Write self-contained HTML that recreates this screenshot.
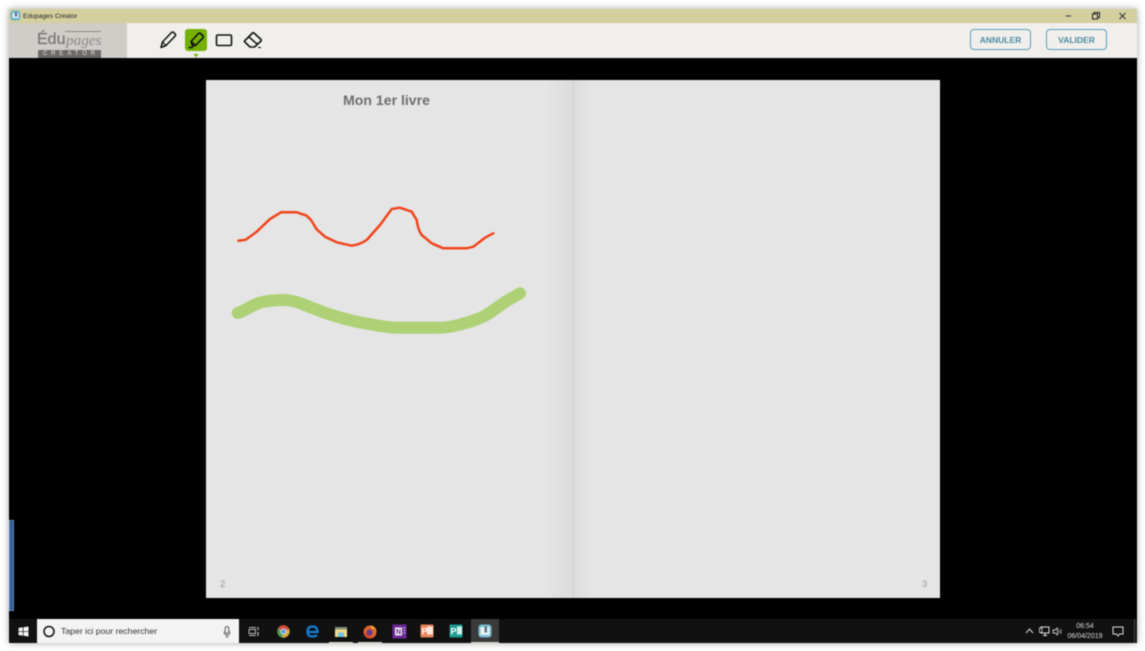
<!DOCTYPE html>
<html lang="fr">
<head>
<meta charset="utf-8">
<title>Edupages Creator</title>
<style>
html,body{margin:0;padding:0;background:#fff;}
body{width:1145px;height:651px;overflow:hidden;position:relative;font-family:"Liberation Sans",sans-serif;}
#all{position:absolute;left:0;top:0;width:1145px;height:651px;filter:blur(.4px);}
.abs{position:absolute;}
#win{left:9px;top:9px;width:1128px;height:634px;background:#000;box-shadow:0 0 7px rgba(0,0,0,.35);}
#title{left:9px;top:9px;width:1128px;height:14px;background:#d3cf9f;}
#title span{position:absolute;left:14px;top:3px;font-size:6.700px;line-height:10px;color:#222;}
#bar{left:9px;top:23px;width:1128px;height:35px;background:#f0efeb;}
#logo{left:9px;top:23px;width:118px;height:35px;background:#d0ccc8;}
.btn{top:29px;height:21px;border:1px solid #5d9fb5;border-radius:4px;box-sizing:border-box;color:#4d8ca3;font-size:8.500px;font-weight:bold;line-height:20px;text-align:center;background:#f0efeb;}
#page{left:206px;top:80px;width:734px;height:518px;background:#e5e5e5;}
#shade{left:545px;top:80px;width:28px;height:518px;background:linear-gradient(90deg,rgba(0,0,0,0),rgba(0,0,0,.045));}
#shade2{left:574px;top:80px;width:18px;height:518px;background:linear-gradient(90deg,rgba(0,0,0,.035),rgba(0,0,0,0));}
#task{left:9px;top:619px;width:1128px;height:24px;background:#111;}
#search{left:37px;top:619px;width:202px;height:24px;background:#f3f3f3;}
#search span{position:absolute;left:24px;top:7px;font-size:8.700px;line-height:11px;color:#333;}
.tray{color:#ddd;font-size:7px;line-height:9px;text-align:center;}
svg{position:absolute;overflow:visible;}
</style>
</head>
<body>
<div id="all">
<div class="abs" id="win"></div>
<div class="abs" id="title"><span>Edupages Creator</span></div>
<svg style="left:10px;top:10px" width="11" height="11" viewBox="0 0 11 11"><rect x="0.500" y="0.500" width="10" height="10" rx="3" fill="#6db5c9"/><rect x="2.500" y="3" width="6" height="5" fill="#e4f0f0"/><rect x="5" y="2.500" width="2" height="4" fill="#558"/></svg>
<svg style="left:1060px;top:10px" width="70" height="12" viewBox="0 0 70 12"><path d="M6 6h5" stroke="#333" stroke-width="1"/><rect x="32.500" y="4" width="5" height="5" fill="none" stroke="#222" stroke-width="1"/><path d="M34 4V2.500H39.500V7.500H37.500" fill="none" stroke="#222" stroke-width="1"/><path d="M59.500 3l6 6M65.500 3l-6 6" stroke="#333" stroke-width="1"/></svg>

<div class="abs" id="bar"></div>
<div class="abs" id="logo"></div>
<div class="abs" style="left:37px;top:30px;font-size:16px;line-height:19px;color:#7d7a78;-webkit-text-stroke:.35px #7d7a78;">Édu</div>
<div class="abs" style="left:66px;top:31px;font-family:'Liberation Serif',serif;font-style:italic;font-size:15.200px;line-height:19px;color:#8d8a88;">pages</div>
<div class="abs" style="left:65px;top:31px;width:36px;height:1px;background:#8d8986;"></div>
<div class="abs" style="left:38px;top:50px;width:63px;height:8px;background:#6f6a68;color:#e4e1de;font-size:6px;line-height:8px;text-align:center;letter-spacing:3.900px;text-indent:3px;">CREATOR</div>

<svg style="left:158px;top:30px" width="20" height="20" viewBox="0 0 20 20"><path d="M3 17.500L4.500 12 13.500 2.500Q14.500 1.700 15.500 2.300L17.300 4.200Q18 5.200 17 6.200L8 15.500Z" fill="none" stroke="#111" stroke-width="1.500" stroke-linejoin="round"/><path d="M4.500 12L8 15.500" stroke="#111" stroke-width="1.200"/></svg>
<div class="abs" style="left:185px;top:29px;width:22px;height:22px;background:#74b100;border-radius:3px;"></div>
<svg style="left:185px;top:29px" width="22" height="22" viewBox="0 0 22 22"><path d="M6 12.500L13.500 4.500Q14.500 3.800 15.500 4.500L18 7Q18.600 8 18 8.800L10.500 16.500L7.500 17Z" fill="none" stroke="#111" stroke-width="1.600" stroke-linejoin="round"/><path d="M6 12.500L10.500 16.500M3.500 18.500H8" stroke="#111" stroke-width="1.600"/></svg>
<svg style="left:193px;top:54px" width="6" height="4" viewBox="0 0 6 4"><path d="M0.500 0H5.500L3 3.500Z" fill="#74b100"/></svg>
<svg style="left:215px;top:33px" width="18" height="14" viewBox="0 0 18 14"><rect x="1.500" y="2" width="15" height="10.500" rx="1.300" fill="none" stroke="#111" stroke-width="1.600"/></svg>
<svg style="left:243px;top:31px" width="20" height="18" viewBox="0 0 20 18"><path d="M1.500 10L9.500 2Q10.200 1.500 11 2L18 8.500Q18.400 9.300 18 10L11.500 16H7L1.500 10.700Z" fill="none" stroke="#111" stroke-width="1.600" stroke-linejoin="round"/><path d="M6 6L14 13" stroke="#111" stroke-width="1.500"/><path d="M15 16.500H18" stroke="#111" stroke-width="1"/></svg>

<div class="abs btn" style="left:970px;width:61px;">ANNULER</div>
<div class="abs btn" style="left:1046px;width:61px;">VALIDER</div>

<div class="abs" id="page"></div>
<div class="abs" id="shade"></div>
<div class="abs" id="shade2"></div>
<div class="abs" style="left:573px;top:80px;width:1px;height:518px;background:#cecece;"></div>
<div class="abs" style="left:206px;top:92px;width:361px;text-align:center;font-size:14.100px;line-height:17px;font-weight:bold;color:#6f6f6f;">Mon 1er livre</div>
<div class="abs" style="left:220px;top:579px;font-size:9.500px;line-height:12px;color:#a8a8a8;-webkit-text-stroke:.2px #a8a8a8;">2</div>
<div class="abs" style="left:922px;top:579px;font-size:9.500px;line-height:12px;color:#a8a8a8;-webkit-text-stroke:.2px #a8a8a8;">3</div>

<svg style="left:0;top:0" width="1145" height="651" viewBox="0 0 1145 651">
<path d="M238.300 240.700L245.700 239.700L256.700 231.700L270 219L281 212.300H296.700L306.700 215.700L311 220L316.700 229.300L325 236.700L336.700 242.300L351.700 245.700Q360 244.500 366.700 240L380 225L391.700 209L400 207.700L411.700 211.700L416.700 220Q418 230 421.700 235L431.700 243.300L443.300 248.300H466.700L473.300 246.700L485 237.700L493.300 233.300" fill="none" stroke="#f1451c" stroke-width="2.500" stroke-linejoin="round" stroke-linecap="round"/>
<path d="M237.700 313C245 311 252 305 260 302.700C268 300.500 280 299.500 288.300 300.300C295 301 300 303 305 305C314 308.500 322 312 331.700 315C343 318.500 354 321.500 365 323.300C376 325 387 327.700 398.300 327.700H438.300C446 327.700 452 326.700 458.300 325C468 322.500 477 320 485 315.700C494 310.500 500 305 508.300 300L520 293.300" fill="none" stroke="#aed175" stroke-width="12" stroke-linejoin="round" stroke-linecap="round"/>
</svg>

<div class="abs" style="left:9px;top:520px;width:5px;height:91px;background:#34609f;box-shadow:inset 0 0 0 .5px #8da6c4;"></div>

<div class="abs" id="task"></div>
<svg style="left:18px;top:626px" width="11" height="11" viewBox="0 0 11 11"><path d="M0.500 2L4.800 1.300V5.200H0.500ZM5.500 1.200L10.500 0.500V5.200H5.500ZM0.500 5.900H4.800V9.700L0.500 9ZM5.500 5.900H10.500V10.500L5.500 9.800Z" fill="#f4f4f4"/></svg>
<div class="abs" id="search"><span>Taper ici pour rechercher</span></div>
<svg style="left:43px;top:625px" width="13" height="13" viewBox="0 0 13 13"><circle cx="6" cy="6.500" r="5" fill="none" stroke="#111" stroke-width="1.500"/></svg>
<svg style="left:223px;top:626px" width="8" height="12" viewBox="0 0 8 12"><rect x="2.200" y="0.500" width="3.600" height="7" rx="1.800" fill="none" stroke="#555" stroke-width="1"/><path d="M1 5.500Q1 9 4 9T7 5.500M4 9V11M2.500 11H5.500" fill="none" stroke="#555" stroke-width=".8"/></svg>
<svg style="left:248px;top:626px" width="12" height="11" viewBox="0 0 12 11"><path d="M1 1.500H8M1 9.500H8" stroke="#bbb" stroke-width="1"/><rect x="1" y="3.500" width="6.500" height="4" fill="none" stroke="#bbb" stroke-width="1"/><path d="M10 1V4M10 6V10" stroke="#bbb" stroke-width="1.200"/></svg>

<!-- Chrome -->
<svg style="left:277px;top:625px" width="13" height="13" viewBox="0 0 13 13"><circle cx="6.500" cy="6.500" r="6.200" fill="#d9a93a"/><path d="M6.500 6.500L1.400 3A6.200 6.200 0 0 1 12 3.800Z" fill="#d8483b"/><path d="M6.500 6.500L1.200 3.400A6.200 6.200 0 0 0 5 12.500Z" fill="#4a9f55"/><circle cx="6.500" cy="6.500" r="3" fill="#e6eef8"/><circle cx="6.500" cy="6.500" r="2.200" fill="#5a94dd"/></svg>
<!-- Edge -->
<svg style="left:306px;top:625px" width="13" height="13" viewBox="0 0 13 13"><path d="M1.500 7H11.500Q11.500 1.500 6.500 1.500Q1.500 1.500 1.500 7Q1.500 11.500 6.500 11.500Q9.500 11.500 11 10" fill="none" stroke="#1480d8" stroke-width="2.200"/></svg>
<!-- Explorer -->
<svg style="left:334px;top:626px" width="14" height="12" viewBox="0 0 14 12"><rect x="1" y="1" width="12" height="10" fill="#f0d98a"/><rect x="1" y="1" width="12" height="2.500" fill="#7f8f7c"/><rect x="4" y="6.500" width="6" height="4.500" fill="#6fc3e8"/></svg>
<div class="abs" style="left:329px;top:642px;width:24px;height:1px;background:#d9d4c4;"></div>
<!-- Firefox -->
<svg style="left:363px;top:625px" width="14" height="14" viewBox="0 0 14 14"><circle cx="7" cy="7" r="6.500" fill="#e2662a"/><path d="M7 .5A6.500 6.500 0 0 1 13.500 7C13 4 10.500 3 9 3.500Z" fill="#f5b53c"/><circle cx="6.500" cy="7.500" r="3.200" fill="#6a3a88"/><path d="M1 9C3 13 8 14 11 12 8 12.500 4.500 11.500 3 8Z" fill="#e63c2b"/></svg>
<div class="abs" style="left:358px;top:642px;width:24px;height:1px;background:#d9d4c4;"></div>
<!-- OneNote -->
<svg style="left:392px;top:624px" width="15" height="15" viewBox="0 0 15 15"><rect x="0.500" y="0.500" width="14" height="14" fill="#6b2a97"/><rect x="3" y="3.500" width="7" height="8" fill="#eee"/><text x="6.500" y="10" font-size="7" font-weight="bold" fill="#6b2a97" text-anchor="middle" font-family="Liberation Sans">N</text><path d="M11 4h2.500M11 6.500h2.500M11 9h2.500" stroke="#c9a6e0" stroke-width="1"/></svg>
<!-- PowerPoint -->
<svg style="left:420px;top:624px" width="14" height="14" viewBox="0 0 14 14"><rect x="0.500" y="0.500" width="13" height="13" rx="1" fill="#e9855c"/><rect x="7" y="2.500" width="6" height="8" fill="#fbe7d9"/><text x="4.500" y="10.500" font-size="9" font-weight="bold" fill="#fff" text-anchor="middle" font-family="Liberation Sans">P</text></svg>
<!-- Publisher -->
<svg style="left:449px;top:624px" width="14" height="14" viewBox="0 0 14 14"><rect x="0.500" y="0.500" width="13" height="13" rx="1" fill="#1c9c90"/><rect x="8" y="2.500" width="5" height="8" fill="#d2efe9"/><text x="4.500" y="10.500" font-size="9" font-weight="bold" fill="#fff" text-anchor="middle" font-family="Liberation Sans">P</text></svg>
<!-- Active app -->
<div class="abs" style="left:471px;top:619px;width:28px;height:24px;background:#3a3a3a;"></div>
<div class="abs" style="left:471px;top:642px;width:28px;height:1px;background:#d9d4c4;"></div>
<svg style="left:478px;top:624px" width="14" height="14" viewBox="0 0 14 14"><rect x="0.500" y="0.500" width="13" height="13" rx="3" fill="#78bdd4"/><rect x="2.500" y="3" width="9" height="8" fill="#e9f2f2"/><rect x="6.500" y="2.500" width="2.500" height="6" fill="#5f6f88"/></svg>

<svg style="left:1025px;top:627px" width="10" height="8" viewBox="0 0 10 8"><path d="M1 6L4.500 2L8 6" fill="none" stroke="#ddd" stroke-width="1"/></svg>
<svg style="left:1039px;top:626px" width="10" height="11" viewBox="0 0 10 11"><rect x="2" y="1" width="8" height="6" fill="none" stroke="#ddd" stroke-width="1"/><rect x="0.500" y="2" width="2.500" height="4.500" fill="#111" stroke="#ddd" stroke-width=".8"/><path d="M4 9.500H8M6 7V9.500" stroke="#ddd" stroke-width="1"/></svg>
<svg style="left:1052px;top:627px" width="11" height="9" viewBox="0 0 11 9"><path d="M1 3H3L5.500 1V8L3 6H1Z" fill="none" stroke="#ccc" stroke-width=".9"/><path d="M7 3Q8 4.500 7 6M8.500 2Q10.200 4.500 8.500 7" fill="none" stroke="#aaa" stroke-width=".8"/></svg>
<div class="abs tray" style="left:1065px;top:622px;width:40px;">06:54</div>
<div class="abs tray" style="left:1065px;top:632px;width:40px;">06/04/2019</div>
<svg style="left:1112px;top:626px" width="12" height="11" viewBox="0 0 12 11"><path d="M1 1H11V8H7.500L6 10 4.500 8H1Z" fill="none" stroke="#ddd" stroke-width="1"/></svg>
<div class="abs" style="left:1134px;top:619px;width:1px;height:24px;background:#444;"></div>
</div>
</body>
</html>
